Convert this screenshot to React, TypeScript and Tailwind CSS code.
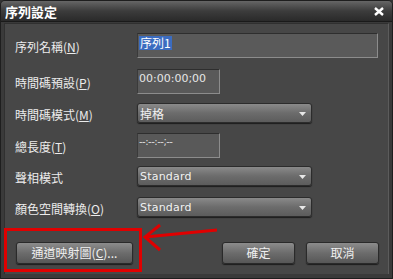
import React from "react";

const font = { fontFamily: '"Noto Sans CJK TC", "Noto Sans", sans-serif' };

function Label({ text, mn }: { text: string; mn?: string }) {
  return (
    <div className="w-[122px] shrink-0 pt-[3px] text-[12px] leading-none text-[#ececec]">
      {text}
      {mn && (
        <>
          (<span className="underline underline-offset-[1px]">{mn}</span>)
        </>
      )}
    </div>
  );
}

function Dropdown({ value, latin }: { value: string; latin?: boolean }) {
  return (
    <div className="relative flex h-[20px] w-[175px] items-center rounded-[3px] border border-[#2c2c2c] bg-gradient-to-b from-[#8a8a8a] via-[#6c6c6c] to-[#5c5c5c] pl-[2px] text-[12px] leading-none text-[#f2f2f2] shadow-[0_1px_1px_#1c1c1c]">
      <span
        className={latin ? "pt-[1px] text-[11.5px] tracking-[0.2px]" : "pt-[1px]"}
        style={latin ? { fontFamily: '"DejaVu Sans", sans-serif', fontSize: "11px" } : undefined}
      >
        {value}
      </span>
      <svg className="absolute right-[5px] top-[8px]" width="7" height="4" viewBox="0 0 7 4">
        <path d="M0 0 H7 L3.5 4 Z" fill="#e8e8e8" />
      </svg>
    </div>
  );
}

function Btn({ text, w }: { text: React.ReactNode; w: string }) {
  return (
    <div
      className={`${w} flex h-[22px] items-center justify-center rounded-[3px] border border-[#2a2a2a] bg-gradient-to-b from-[#8c8c8c] via-[#6c6c6c] to-[#575757] text-[12px] leading-none text-[#f0f0f0] shadow-[0_1px_1px_#1c1c1c]`}
    >
      {text}
    </div>
  );
}

export default function App() {
  return (
    <div className="relative h-[279px] w-[393px] overflow-hidden bg-[#333333]" style={font}>
      <div className="flex h-[279px] flex-col rounded-t-[5px] border border-[#1e1e1e] bg-[#3a3a3a]">
        {/* Title bar */}
        <div className="flex h-[20px] shrink-0 items-center justify-between rounded-t-[4px] bg-gradient-to-b from-[#666666] via-[#3c3c3c] to-[#2a2a2a] pl-[4px] pr-[8px]">
          <span className="text-[13px] font-bold leading-none text-white">序列設定</span>
          <svg width="10" height="9" viewBox="0 0 10 9">
            <path d="M1 1 L9 8 M9 1 L1 8" stroke="#ffffff" strokeWidth="2.4" />
          </svg>
        </div>
        <div className="h-[1px] bg-[#1a1a1a]" />
        {/* Body */}
        <div className="mx-[3px] mb-[4px] mt-[1px] flex flex-1 flex-col border-l border-r border-t border-[#303030] border-r-[#5c5c5c] bg-[#474747] pl-[10px]">
          <div className="mt-[9px] flex items-center">
            <Label text="序列名稱" mn="N" />
            <div className="flex h-[25px] w-[241px] items-start border border-[#8c8c8c] border-l-[#3a3a3a] border-t-[#2e2e2e] bg-[#5a5a5a] pl-[1px] pt-[2px]">
              <span className="bg-[#3b6cc0] px-[1px] text-[12px] leading-[14px] text-white">序列1</span>
            </div>
          </div>
          <div className="mt-[11px] flex items-center">
            <Label text="時間碼預設" mn="P" />
            <div
              className="flex h-[25px] w-[83px] items-start border border-[#8c8c8c] border-l-[#3a3a3a] border-t-[#2e2e2e] bg-[#595959] pl-[1px] pt-[3px] text-[11px] leading-none text-[#e6e6e6]"
              style={{ fontFamily: '"DejaVu Sans", sans-serif' }}
            >
              00:00:00;00
            </div>
          </div>
          <div className="mt-[9px] flex items-center">
            <Label text="時間碼模式" mn="M" />
            <Dropdown value="掉格" />
          </div>
          <div className="mt-[10px] flex items-center">
            <Label text="總長度" mn="T" />
            <div
              className="flex h-[25px] w-[83px] items-start border border-[#8c8c8c] border-l-[#3a3a3a] border-t-[#2e2e2e] bg-[#595959] pl-[1px] pt-[3px] text-[10px] leading-none tracking-[-0.5px] text-[#dcdcdc]"
              style={{ fontFamily: '"DejaVu Sans", sans-serif' }}
            >
              --:--:--;--
            </div>
          </div>
          <div className="mt-[8px] flex items-center">
            <Label text="聲相模式" />
            <Dropdown value="Standard" latin />
          </div>
          <div className="mt-[11px] flex items-center">
            <Label text="顏色空間轉換" mn="O" />
            <Dropdown value="Standard" latin />
          </div>
          <div className="mt-[25px] flex items-center pr-[9px]">
            <Btn
              w="w-[117px] ml-[1px]"
              text={
                <>
                  通道映射圖(<span className="underline underline-offset-[1px]">C</span>)...
                </>
              }
            />
            <div className="flex-1" />
            <Btn w="w-[73px]" text="確定" />
            <div className="w-[11px]" />
            <Btn w="w-[73px]" text="取消" />
          </div>
        </div>
      </div>
      {/* Annotation */}
      <div className="absolute left-[4px] top-[228px] h-[44px] w-[138px] border-[3px] border-[#e00000]" />
      <svg className="absolute left-0 top-0" width="393" height="279" viewBox="0 0 393 279">
        <path d="M145 237 L217 230" stroke="#e00000" strokeWidth="3" />
        <path d="M160 225 L145 237 L160 250" stroke="#e00000" strokeWidth="3" fill="none" />
      </svg>
    </div>
  );
}
